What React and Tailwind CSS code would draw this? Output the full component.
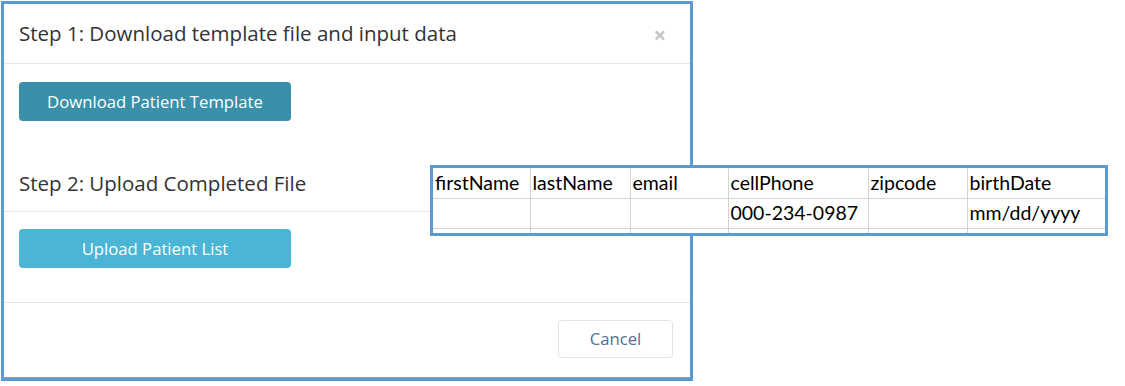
import React from "react";

const columns = [
  { name: "firstName", width: "w-[97px]" },
  { name: "lastName", width: "w-[100px]" },
  { name: "email", width: "w-[98px]" },
  { name: "cellPhone", width: "w-[140px]" },
  { name: "zipcode", width: "w-[99px]" },
  { name: "birthDate", width: "w-[138px]" },
];

const sampleRow = ["", "", "", "000-234-0987", "", "mm/dd/yyyy"];

const TemplatePreview = () => {
  return (
    <div className="absolute left-[430px] top-[164px] w-[678px] h-[71px] overflow-hidden border-[3px] border-[#5b9bd5] bg-white font-['Lato',sans-serif] text-[19.5px] text-black">
      <table className="table-fixed border-collapse">
        <colgroup>
          {columns.map((c) => (
            <col key={c.name} className={c.width} />
          ))}
        </colgroup>
        <tbody>
          <tr className="h-[30px]">
            {columns.map((c, i) => (
              <td
                key={c.name}
                className={`px-[2px] pt-[1px] leading-[28px] border-b border-[#d4d4d4] ${
                  i < columns.length - 1 ? "border-r" : ""
                }`}
              >
                {c.name}
              </td>
            ))}
          </tr>
          <tr className="h-[30px]">
            {sampleRow.map((v, i) => (
              <td
                key={i}
                className={`px-[2px] leading-[28px] border-b border-[#d4d4d4] ${
                  i < sampleRow.length - 1 ? "border-r" : ""
                }`}
              >
                {v}
              </td>
            ))}
          </tr>
          <tr className="h-[20px]">
            {sampleRow.map((_, i) => (
              <td
                key={i}
                className={`border-[#d4d4d4] ${i < sampleRow.length - 1 ? "border-r" : ""}`}
              />
            ))}
          </tr>
        </tbody>
      </table>
    </div>
  );
};

const App = () => {
  return (
    <div className="relative w-[1125px] h-[386px] bg-white font-['Open_Sans',sans-serif]">
      <div className="ml-px mt-px w-[692px] border-[3px] border-[#5b9bd5] bg-white">
        <div className="flex h-[60px] items-center justify-between border-b border-[#e5e5e5] pl-[15px] pr-[24px]">
          <h2 className="text-[20.5px] text-[#333]">Step 1: Download template file and input data</h2>
          <span className="text-[22px] font-bold leading-none text-[#c4c4c4]">×</span>
        </div>

        <div className="px-[15px] pt-[18px]">
          <button className="h-[39px] w-[272px] rounded-[4px] bg-[#3990a8] text-[16.7px] text-white">
            Download Patient Template
          </button>
        </div>

        <div className="border-b border-[#e5e5e5] px-[15px] pt-[50px] pb-[16px]">
          <h2 className="text-[20.5px] leading-[24px] text-[#333]">Step 2: Upload Completed File</h2>
        </div>

        <div className="h-[91px] border-b border-[#e5e5e5] px-[15px] pt-[17px]">
          <button className="h-[39px] w-[272px] rounded-[4px] bg-[#4ab5d5] text-[16.7px] text-white">
            Upload Patient List
          </button>
        </div>

        <div className="flex h-[75px] justify-end border-b border-[#9a9a9a] pt-[17px] pr-[17px]">
          <button className="h-[38px] w-[115px] rounded-[4px] border border-[#dfe3e7] bg-white text-[16.7px] text-[#50708f]">
            Cancel
          </button>
        </div>
      </div>

      <TemplatePreview />
    </div>
  );
};

export default App;
